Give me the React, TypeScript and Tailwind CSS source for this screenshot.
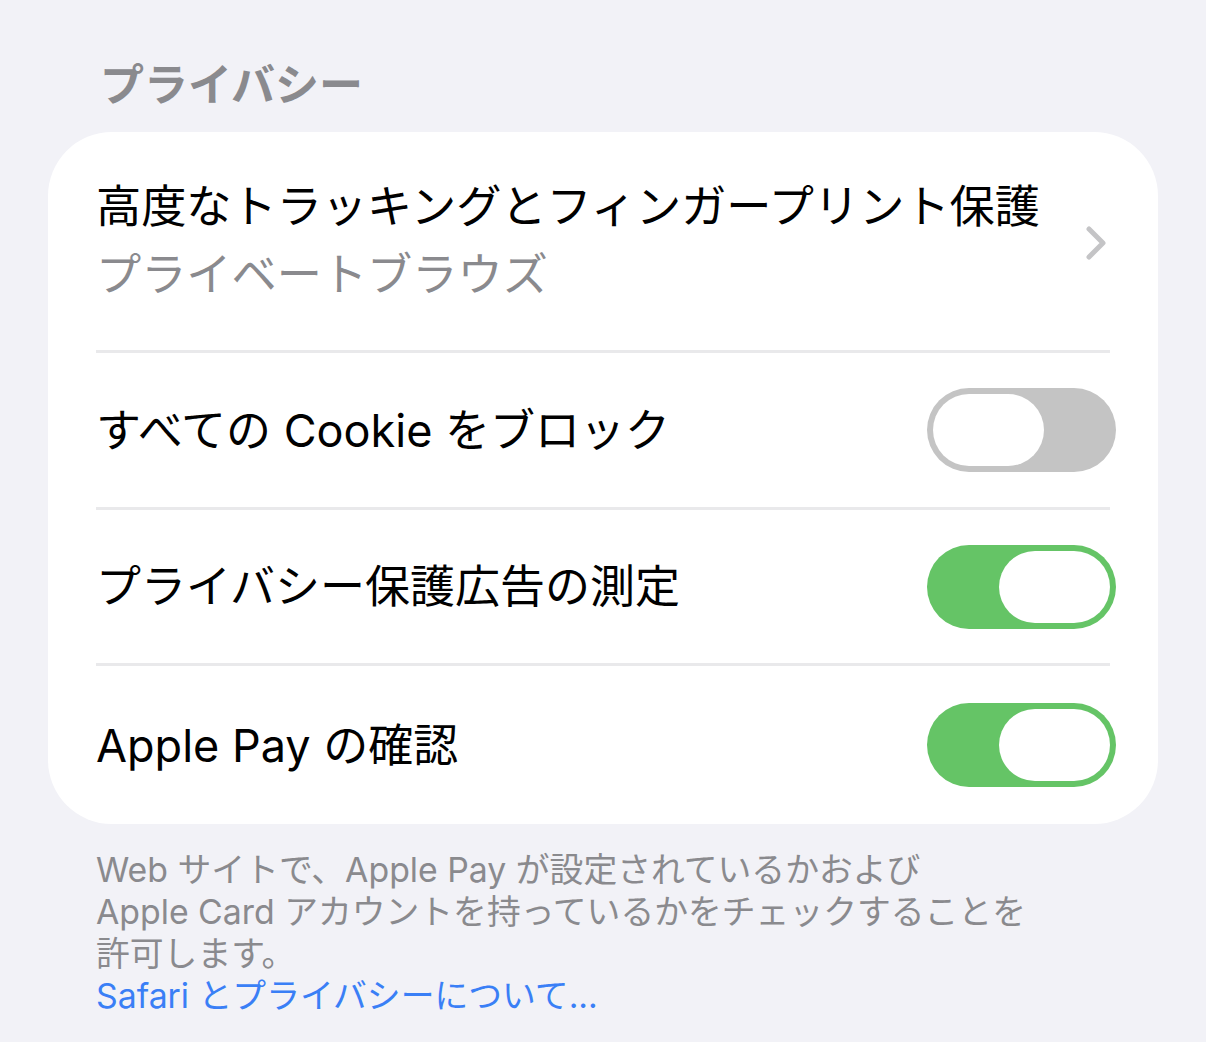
import React from 'react';

const Toggle: React.FC<{ on: boolean }> = ({ on }) => (
  <div
    className={`flex h-[84px] w-[189px] shrink-0 items-center rounded-full p-[6px] ${
      on ? 'justify-end bg-[#65c466]' : 'justify-start bg-[#c4c4c4]'
    }`}
  >
    <div className="h-[72px] w-[111px] rounded-full bg-white" />
  </div>
);

const Divider: React.FC = () => <div className="mx-[48px] h-[3px] bg-[#e9e9eb]" />;

const ToggleRow: React.FC<{ label: React.ReactNode; on: boolean; h: string }> = ({ label, on, h }) => (
  <div className={`flex items-center justify-between pl-[48px] pr-[42px] ${h}`}>
    <span className="text-[45px] leading-none text-black">{label}</span>
    <Toggle on={on} />
  </div>
);

const App: React.FC = () => {
  return (
    <div
      className="min-h-screen bg-[#f2f2f7] px-[48px]"
      style={{ fontFamily: 'Inter, "Noto Sans CJK JP", sans-serif' }}
    >
      <div className="h-[132px] pt-[65px] pl-[52px]">
        <h2 className="text-[44px] font-bold leading-[40px] text-[#8a8a8e]">プライバシー</h2>
      </div>

      <div className="w-[1110px] overflow-hidden rounded-[64px] bg-white">
        <div className="flex h-[218px] items-center justify-between pl-[48px] pr-[50px]">
          <div className="flex flex-col text-[45.2px] leading-[68px]">
            <span className="text-black">高度なトラッキングとフィンガープリント保護</span>
            <span className="text-[#8a8a8e]">プライベートブラウズ</span>
          </div>
          <svg width="24" height="36" viewBox="0 0 24 36" className="mt-[4px]">
            <polyline
              points="5,4 19,18 5,32"
              fill="none"
              stroke="#c4c4c6"
              strokeWidth="5"
              strokeLinecap="round"
              strokeLinejoin="round"
            />
          </svg>
        </div>
        <Divider />
        <ToggleRow h="h-[154px]" on={false} label="すべての Cookie をブロック" />
        <Divider />
        <ToggleRow h="h-[153px]" on={true} label="プライバシー保護広告の測定" />
        <Divider />
        <ToggleRow h="h-[158px]" on={true} label="Apple Pay の確認" />
      </div>

      <div className="pt-[25px] pl-[48px] text-[33.8px] leading-[42px] text-[#8a8a8e]">
        <p>
          Web サイトで、Apple Pay が設定されているかおよび
          <br />
          Apple Card アカウントを持っているかをチェックすることを
          <br />
          許可します。
        </p>
        <p className="text-[#3a7ff6]">Safari とプライバシーについて...</p>
      </div>
    </div>
  );
};

export default App;
